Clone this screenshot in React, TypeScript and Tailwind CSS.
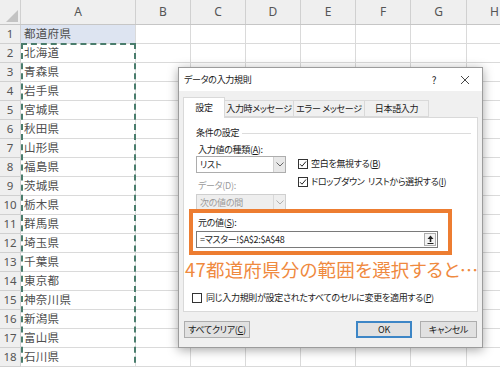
import type { ReactNode } from 'react';

const prefectures = [
  '都道府県', '北海道', '青森県', '岩手県', '宮城県', '秋田県', '山形県', '福島県', '茨城県',
  '栃木県', '群馬県', '埼玉県', '千葉県', '東京都', '神奈川県', '新潟県', '富山県', '石川県',
];

const columns = [
  { name: 'A', w: 'w-[115px]' },
  { name: 'B', w: 'w-[55px]' },
  { name: 'C', w: 'w-[55px]' },
  { name: 'D', w: 'w-[55px]' },
  { name: 'E', w: 'w-[55px]' },
  { name: 'F', w: 'w-[55px]' },
  { name: 'G', w: 'w-[56px]' },
  { name: 'H', w: 'w-[56px]' },
];

const jp = "font-['Noto_Sans_CJK_JP',sans-serif]";

function Checkbox() {
  return (
    <span className="flex h-[10px] w-[10px] shrink-0 items-center justify-center border border-[#333] bg-white">
      <svg width="8" height="8" viewBox="0 0 8 8">
        <path d="M1 4.2 L3 6.2 L7 1.5" fill="none" stroke="#222" strokeWidth="1" />
      </svg>
    </span>
  );
}

function EmptyCheckbox() {
  return <span className="h-[10px] w-[10px] shrink-0 border border-[#333] bg-white" />;
}

function Chevron({ color }: { color: string }) {
  return (
    <svg width="8" height="5" viewBox="0 0 8 5">
      <path d="M0.5 0.5 L4 4 L7.5 0.5" fill="none" stroke={color} strokeWidth="1" />
    </svg>
  );
}

function Select({ children, disabled }: { children: ReactNode; disabled?: boolean }) {
  return (
    <div
      className={`flex h-[17px] w-[90px] items-stretch border ${
        disabled ? 'border-[#cfcfcf] bg-[#eeeeee] text-[#9a9a9a]' : 'border-[#adadad] bg-white text-[#222]'
      }`}
    >
      <span className="flex flex-1 items-center pl-[3px] leading-none">{children}</span>
      <span
        className={`flex w-[12px] items-center justify-center border-l ${
          disabled ? 'border-[#d8d8d8] bg-[#eeeeee]' : 'border-[#d0d0d0] bg-[#e8e8e8]'
        }`}
      >
        <Chevron color={disabled ? '#b0b0b0' : '#666'} />
      </span>
    </div>
  );
}

function Dialog() {
  return (
    <div
      className={`absolute left-[178px] top-[67px] flex h-[281px] w-[305px] flex-col border border-[#9c9c9c] bg-[#f0f0f0] text-[9px] tracking-[-0.3px] text-[#1a1a1a] shadow-[0_2px_10px_rgba(0,0,0,0.35)] ${jp} [font-feature-settings:'palt']`}
    >
      {/* title bar */}
      <div className="flex h-[23px] items-center bg-white pl-[5px]">
        <span className="flex-1">データの入力規則</span>
        <span className="w-[18px] text-center text-[10px]">?</span>
        <span className="ml-[17px] mr-[8px] w-[14px]">
          <svg width="10" height="10" viewBox="0 0 10 10">
            <path d="M1 1 L9 9 M9 1 L1 9" stroke="#333" strokeWidth="0.9" />
          </svg>
        </span>
      </div>

      {/* tabs */}
      <div className="mt-[6px] flex items-end whitespace-nowrap pl-[4px]">
        <div className="relative z-10 -mb-px flex h-[21px] w-[42px] items-center justify-center border border-b-0 border-[#d9d9d9] bg-white">
          設定
        </div>
        <div className="flex h-[17px] w-[69px] items-center justify-center border border-l-0 border-[#d9d9d9] bg-[#f0f0f0]">
          入力時メッセージ
        </div>
        <div className="flex h-[17px] w-[71px] items-center justify-center border border-l-0 border-[#d9d9d9] bg-[#f0f0f0]">
          エラー メッセージ
        </div>
        <div className="flex h-[17px] w-[64px] items-center justify-center border border-l-0 border-[#d9d9d9] bg-[#f0f0f0]">
          日本語入力
        </div>
      </div>

      {/* panel */}
      <div className="ml-[4px] flex h-[195px] w-[295px] flex-col border border-[#d9d9d9] bg-white">
        <div className="mt-[8px] flex h-[14px] items-center pl-[12px] pr-[6px]">
          <span>条件の設定</span>
          <span className="ml-[3px] h-px flex-1 bg-[#dcdcdc]" />
        </div>

        <div className="flex pl-[12px]">
          <div className="flex flex-col">
            <span className="mt-[3px] flex h-[13px] items-center pl-[2px]">
              入力値の種類(<u>A</u>):
            </span>
            <Select>リスト</Select>
            <span className="mt-[6px] flex h-[14px] items-center pl-[2px] text-[#9a9a9a]">
              データ(D):
            </span>
            <div className="mt-[1px]">
              <Select disabled>次の値の間</Select>
            </div>
          </div>
          <div className="ml-[12px] flex flex-col">
            <div className="mt-[17px] flex h-[14px] items-center gap-[3px]">
              <Checkbox />
              <span>
                空白を無視する(<u>B</u>)
              </span>
            </div>
            <div className="mt-[4px] flex h-[14px] items-center gap-[3px]">
              <Checkbox />
              <span className="whitespace-pre">
                ドロップダウン  リストから選択する(<u>I</u>)
              </span>
            </div>
          </div>
        </div>

        {/* highlighted source */}
        <div className="-mt-[2px] ml-[5px] flex w-[263px] flex-col border-4 border-[#ed7d31] pb-[3px] pl-[3px] pt-[3px]">
          <span className="flex h-[14px] items-center pl-[2px]">
            元の値(<u>S</u>):
          </span>
          <div className="mt-[1px] flex h-[17px] w-[242px] items-center border border-[#7a7a7a] bg-white pl-[3px] pr-[1px]">
            <span className="flex-1 leading-none">=マスター!$A$2:$A$48</span>
            <span className="flex h-[13px] w-[12px] items-center justify-center border border-[#adadad] bg-[#f3f3f3]">
              <svg width="7" height="9" viewBox="0 0 7 9">
                <path d="M3.5 0.5 L6.5 4 L4.3 4 L4.3 7 L2.7 7 L2.7 4 L0.5 4 Z" fill="#222" />
                <path d="M0.5 8.5 L6.5 8.5" stroke="#222" strokeWidth="1" />
              </svg>
            </span>
          </div>
        </div>

        <div className="mt-[2px] flex h-[24px] items-center whitespace-nowrap pl-[1px] text-[18.5px] leading-none tracking-[0.2px] text-[#ef8a3f]">
          47都道府県分の範囲を選択すると…
        </div>

        <div className="mt-[10px] flex h-[14px] items-center gap-[4px] pl-[8px]">
          <EmptyCheckbox />
          <span>
            同じ入力規則が設定されたすべてのセルに変更を適用する(<u>P</u>)
          </span>
        </div>
      </div>

      {/* buttons */}
      <div className="mt-[9px] flex items-center px-[5px]">
        <button className="flex h-[17px] w-[66px] items-center justify-center border border-[#adadad] bg-[#e1e1e1]">
          すべてクリア(<u>C</u>)
        </button>
        <span className="flex-1" />
        <button className="flex h-[17px] w-[56px] items-center justify-center border-2 border-[#3d86c6] bg-[#e1e1e1]">
          OK
        </button>
        <button className="ml-[8px] flex h-[17px] w-[57px] items-center justify-center border border-[#adadad] bg-[#e1e1e1]">
          キャンセル
        </button>
      </div>
    </div>
  );
}

export default function App() {
  return (
    <div className="relative h-[367px] w-[500px] overflow-hidden bg-white">
      {/* column headers */}
      <div className="flex h-[25px] border-b border-[#c6c6c6] bg-[#efefef]">
        <div className="relative w-[21px] shrink-0 border-r border-[#d0d0d0]">
          <svg className="absolute bottom-[2px] right-[2px]" width="12" height="12" viewBox="0 0 12 12">
            <path d="M12 0 L12 12 L0 12 Z" fill="#c3c3c3" />
          </svg>
        </div>
        {columns.map((c) => (
          <div
            key={c.name}
            className={`${c.w} flex shrink-0 items-center justify-center border-r border-[#d0d0d0] font-['Noto_Sans',sans-serif] text-[12px] text-[#555]`}
          >
            {c.name}
          </div>
        ))}
      </div>

      {/* rows */}
      {prefectures.map((p, i) => (
        <div key={i} className="flex h-[19px]">
          <div className="flex w-[21px] shrink-0 items-center justify-center border-b border-r border-[#d0d0d0] bg-[#efefef] font-['Noto_Sans',sans-serif] text-[11.5px] text-[#555]">
            {i + 1}
          </div>
          {columns.map((c, j) => (
            <div
              key={c.name}
              className={`${c.w} flex shrink-0 items-center border-b border-r border-[#dadada] pl-[3px] ${jp} text-[11.5px] tracking-[0.3px] text-[#505050] ${
                j === 0 && i === 0 ? 'bg-[#dde4f1]' : ''
              }`}
            >
              {j === 0 ? p : ''}
            </div>
          ))}
        </div>
      ))}

      {/* copy range marquee */}
      <div className="absolute left-[21px] top-[43px] h-[340px] w-[115px] border-2 border-dashed border-[#4a7d6d]" />

      <Dialog />
    </div>
  );
}
